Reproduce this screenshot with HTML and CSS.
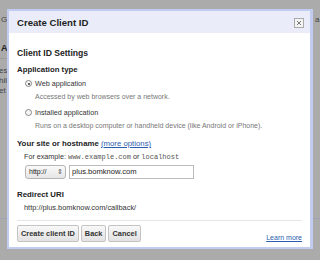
FILE: index.html
```html
<!DOCTYPE html>
<html lang="en">
<head>
    <meta charset="UTF-8">
    <title>Create Client ID</title>
    <link rel="stylesheet" href="styles.css">
</head>
<body>
    <div class="page">
        <span class="frag frag-g">G</span>
        <span class="frag frag-a">a</span>
        <span class="frag frag-bold">A</span>
        <div class="page-rule"></div>
        <span class="frag frag-1">es</span>
        <span class="frag frag-2">hil</span>
        <span class="frag frag-3">et</span>
        <div class="page-rule-low"></div>
    </div>

    <div class="dialog">
        <div class="dialog-title">
            <span>Create Client ID</span>
            <span class="close">
                <svg width="8" height="8" viewBox="0 0 8 8"><path d="M2 2 L6 6 M6 2 L2 6" stroke="#777" stroke-width="1" fill="none"/></svg>
            </span>
        </div>

        <div class="dialog-body">
            <h2>Client ID Settings</h2>

            <h3>Application type</h3>
            <div class="option">
                <span class="radio checked"></span>
                <div>
                    <div class="option-name">Web application</div>
                    <div class="option-desc">Accessed by web browsers over a network.</div>
                </div>
            </div>
            <div class="option">
                <span class="radio"></span>
                <div>
                    <div class="option-name">Installed application</div>
                    <div class="option-desc">Runs on a desktop computer or handheld device (like Android or iPhone).</div>
                </div>
            </div>

            <h3 class="site-title">Your site or hostname <a href="#">(more options)</a></h3>
            <p class="example">For example: <code>www.example.com</code> or <code>localhost</code></p>
            <div class="host-row">
                <span class="select">http:// <span class="arrows">&#8661;</span></span>
                <span class="host-input">plus.bomknow.com</span>
            </div>

            <h3 class="redirect-title">Redirect URI</h3>
            <p class="redirect">http://plus.bomknow.com/callback/</p>

            <div class="footer">
                <button class="btn">Create client ID</button>
                <button class="btn">Back</button>
                <button class="btn">Cancel</button>
                <a href="#" class="learn">Learn more</a>
            </div>
        </div>
    </div>
</body>
</html>
```

FILE: styles.css
```css
body {
    margin: 0;
    width: 320px;
    height: 260px;
    overflow: hidden;
    background-color: #ababab;
    font-family: 'Liberation Sans', Arial, sans-serif;
    color: #222;
}
.page {
    position: relative;
    width: 320px;
    height: 260px;
}
.frag {
    position: absolute;
    font-size: 8px;
    color: #444;
}
.frag-g { left: 1px; top: 15px; }
.frag-a { left: 315px; top: 15px; }
.frag-bold { left: 1px; top: 43px; font-weight: bold; font-size: 9px; color: #222; }
.frag-1 { left: -1px; top: 66px; }
.frag-2 { left: -1px; top: 76px; }
.frag-3 { left: -1px; top: 86px; }
.page-rule {
    position: absolute;
    left: 0;
    top: 58px;
    width: 10px;
    height: 1px;
    background: #9a9a9a;
}
.page-rule-low {
    position: absolute;
    left: 0;
    top: 218px;
    width: 320px;
    height: 1px;
    background: #9ea3b4;
}

/* modal */
.dialog {
    position: absolute;
    left: 7px;
    top: 9px;
    width: 301px;
    height: 236px;
    border: 2px solid #c2cbf0;
    border-right-width: 3px;
    background: white;
}
.dialog-title {
    height: 21px;
    display: flex;
    align-items: center;
    justify-content: space-between;
    padding: 1px 6px 0 8px;
    background-color: #eaedf9;
    font-weight: bold;
    font-size: 9.6px;
}
.close {
    width: 8px;
    height: 8px;
    border: 1px solid #aaa;
    background: #f4f4f4;
    display: flex;
    align-items: center;
    justify-content: center;
}
.dialog-body {
    padding: 13px 8px 0 8px;
}
h2 {
    font-size: 8.6px;
    line-height: 14px;
    margin: 0 0 3px 0;
}
h3 {
    font-size: 7.8px;
    line-height: 14px;
    margin: 0;
}
.option {
    display: flex;
    gap: 3px;
    padding-left: 8px;
    margin-bottom: 3px;
}
.radio {
    width: 5px;
    height: 5px;
    margin-top: 3px;
    border: 1px solid #888;
    border-radius: 50%;
    background: #f6f6f6;
    position: relative;
}
.radio.checked::after {
    content: '';
    position: absolute;
    left: 1.5px;
    top: 1.5px;
    width: 2px;
    height: 2px;
    border-radius: 50%;
    background: #333;
}
.option-name {
    font-size: 7.2px;
    line-height: 14px;
    color: #333;
}
.option-desc {
    font-size: 7px;
    line-height: 12px;
    color: #777;
}
.site-title {
    margin-top: 5px;
}
.site-title a {
    font-weight: normal;
    color: #2a5db0;
}
.example {
    margin: 0;
    padding-left: 7px;
    font-size: 7.2px;
    line-height: 12px;
    color: #333;
}
code {
    font-family: 'Liberation Mono', 'Courier New', monospace;
    font-size: 7px;
    color: #555;
}
.host-row {
    display: flex;
    gap: 3px;
    margin: 2px 0 0 8px;
}
.select {
    height: 12px;
    width: 34px;
    padding: 0 2px 0 3px;
    border: 1px solid #b5b5b5;
    border-radius: 3px;
    background: linear-gradient(#fafafa, #e6e6e6);
    font-size: 7px;
    line-height: 12px;
    display: flex;
    justify-content: space-between;
}
.arrows {
    font-size: 7px;
    color: #555;
}
.host-input {
    width: 121px;
    height: 12px;
    border: 1px solid #bbb;
    font-size: 7.6px;
    line-height: 12px;
    padding-left: 2px;
    color: #222;
}
.redirect-title {
    margin-top: 9px;
}
.redirect {
    margin: 0;
    padding-left: 7px;
    font-size: 7.4px;
    line-height: 12px;
    color: #333;
}
.footer {
    margin-top: 6px;
    border-top: 1px solid #e6e6e6;
    padding-top: 4px;
    display: flex;
    align-items: center;
    gap: 2px;
}
.btn {
    height: 17px;
    padding: 0 3px;
    border: 1px solid #c4c4c4;
    border-radius: 2px;
    background: linear-gradient(#f8f8f8, #e2e2e2);
    font-family: 'Liberation Sans', Arial, sans-serif;
    font-weight: bold;
    font-size: 7.4px;
    color: #333;
}
.learn {
    margin-left: auto;
    margin-top: 8px;
    font-size: 7px;
    color: #2a5db0;
}
```
